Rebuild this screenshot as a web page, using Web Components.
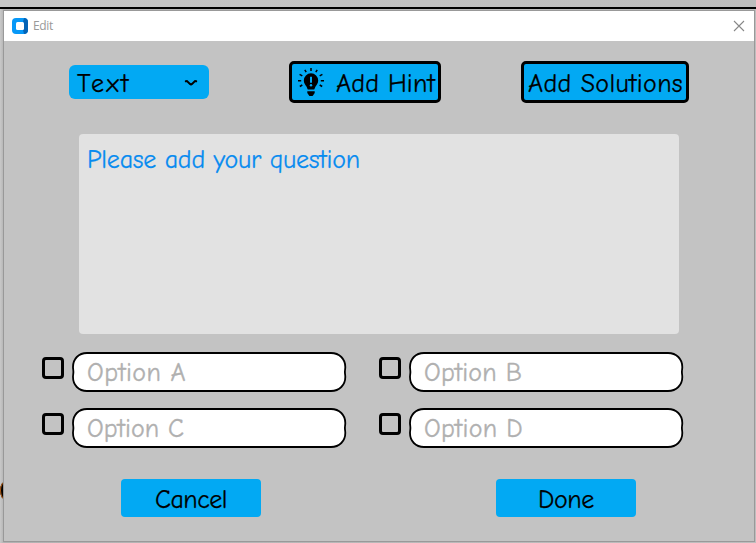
<!DOCTYPE html>
<html lang="en">
<head>
<meta charset="utf-8">
<title>Edit</title>
<style>
html,body{margin:0;width:756px;height:543px;overflow:hidden}
body{font-family:"Comic Sans MS","Comic Neue","Noto Sans",sans-serif;font-size:26px;color:#000;background:#c3c3c3}
</style>
</head>
<body>
<edit-desktop>
  <edit-window>
    <edit-form></edit-form>
  </edit-window>
</edit-desktop>
<script>
function define(name, html, setup) {
  const template = document.createElement('template');
  template.innerHTML = html;
  customElements.define(name, class extends HTMLElement {
    constructor() {
      super();
      this.attachShadow({mode: 'open'}).append(template.content.cloneNode(true));
    }
    connectedCallback() { if (setup) setup(this, this.shadowRoot); }
  });
}

/* A label whose letters are spaced evenly over a given width. */
define('fit-label', `
<style>:host{display:inline-block;white-space:nowrap;line-height:36px;height:34px;flex:none;-webkit-text-stroke:var(--stroke,.25px)}span{display:inline-block}</style>
<span><slot></slot></span>`, (el, root) => {
  const width = Number(el.getAttribute('width'));
  const span = root.querySelector('span');
  const natural = span.getBoundingClientRect().width;
  const count = el.textContent.length;
  if (natural && count) span.style.letterSpacing = (width - natural) / count + 'px';
  el.style.width = width + 'px';
});

define('icon-bulb', `
<style>:host{display:block;width:26px;height:30px;flex:none}svg{display:block}</style>
<svg width="26" height="30" viewBox="0 0 26 30">
  <path d="M13 5.3a7.2 7.2 0 0 0-7.2 7.2c0 3 1.7 4.5 2.8 6.2.5.9.7 2 1.2 2.8h6.4c.5-.8.7-1.9 1.2-2.8 1.1-1.7 2.8-3.2 2.8-6.2A7.2 7.2 0 0 0 13 5.3z"/>
  <path d="M9.3 23.3h7.4v1.8L14.6 28h-3.2l-2.1-2.9z"/>
  <path d="M13 0v3M6.8 1.8l1.4 2.4M19.2 1.8l-1.4 2.4M1.6 6.3l2.7 1.5M24.4 6.3l-2.7 1.5M0 12.7h3.2M26 12.7h-3.2M1.8 18.5l2.5-1.5M24.2 18.5l-2.5-1.5" fill="none" stroke="#000" stroke-width="1.5"/>
  <path d="M13 8.7v6" stroke="#02a9f3" stroke-width="2"/>
  <circle cx="13" cy="17.3" r="1.2" fill="#02a9f3"/>
</svg>`);

define('edit-button', `
<style>
:host{display:flex;align-items:center;justify-content:center;box-sizing:border-box;width:140px;height:38px;background:#02a9f3;border-radius:4px;padding-top:1px}
:host([outlined]){height:42px;border:3px solid #000;border-radius:5px;padding-top:2px}
:host([hint]){width:152px;justify-content:flex-start;gap:12px;padding-left:6px}
:host([solutions]){width:168px;padding-left:1px}
</style><slot></slot>`);

define('edit-select', `
<style>
:host{display:flex;align-items:center;justify-content:space-between;box-sizing:border-box;width:140px;height:34px;margin-top:4px;padding:2px 11px 0 8px;background:#02a9f3;border-radius:6px}
svg{display:block;margin-top:-1px}
</style>
<slot></slot>
<svg width="14" height="8" viewBox="0 0 14 8"><path d="M1.8 2.3l1.2-.2c1.4.8 2.2 2.8 4 3.4 1.800-.6 2.600-2.600 4-3.400l1.200.2" fill="none" stroke="#000" stroke-width="2" stroke-linecap="round"/></svg>`);

define('edit-question', `
<style>
:host{display:block;box-sizing:border-box;width:600px;height:200px;padding:8px;background:#e2e2e2;border-radius:4px;color:#078bf0}
</style><slot></slot>`);

define('edit-option', `
<style>
:host{display:flex;width:305px;height:40px;gap:8px}
.check{box-sizing:border-box;width:22px;height:22px;margin-top:5px;border:3px solid #000;border-radius:4px;flex:none}
.field{display:grid;width:275px;height:40px;color:#b0b0b0;--stroke:.35px}
.field>*{grid-area:1/1}
.text{padding:3px 0 0 15px}
svg{display:block}
</style>
<div class="check"></div>
<div class="field">
  <svg width="275" height="40" viewBox="0 0 275 40"><path d="M15 1H259C267.500 1 273.300 7 273.300 15C273.300 17 272.900 18 272.900 20S273.300 23 273.300 25C273.300 33 267.500 39 259 39H15C6.500 39 1 33 1 25C1 23 1.400 22 1.400 20S1 17 1 15C1 7 6.500 1 15 1Z" fill="#fff" stroke="#000" stroke-width="1.800"/></svg>
  <div class="text"><slot></slot></div>
</div>`);

define('edit-form', `
<style>
:host{display:block;padding:20px 0 0 38px}
.tools{display:flex;padding-left:27px}
.tools edit-button[hint]{margin-left:80px}
.tools edit-button[solutions]{margin-left:80px}
edit-question{margin:31px 0 0 37px}
.options{display:grid;grid-template-columns:305px 305px;column-gap:32px;row-gap:16px;margin-top:18px}
.actions{display:flex;gap:235px;margin:31px 0 0 79px}
</style>
<div class="tools">
  <edit-select><fit-label width="54">Text</fit-label></edit-select>
  <edit-button outlined hint><icon-bulb></icon-bulb><fit-label width="99">Add Hint</fit-label></edit-button>
  <edit-button outlined solutions><fit-label width="155">Add Solutions</fit-label></edit-button>
</div>
<edit-question><fit-label width="273">Please add your question</fit-label></edit-question>
<div class="options">
  <edit-option><fit-label width="99">Option A</fit-label></edit-option>
  <edit-option><fit-label width="98">Option B</fit-label></edit-option>
  <edit-option><fit-label width="97">Option C</fit-label></edit-option>
  <edit-option><fit-label width="99">Option D</fit-label></edit-option>
</div>
<div class="actions">
  <edit-button><fit-label width="72">Cancel</fit-label></edit-button>
  <edit-button><fit-label width="56">Done</fit-label></edit-button>
</div>`);

define('edit-window', `
<style>
:host{display:block;box-sizing:border-box;width:752px;height:532px;border:1px solid #999;background:#c3c3c3}
header{display:flex;align-items:center;box-sizing:border-box;height:30px;padding:0 9px 0 8px;background:#fff;color:#999;font:12px "Open Sans",sans-serif;--stroke:0}
svg{display:block;flex:none}
.title{margin-left:5px;flex:1;line-height:16px}
.title fit-label{line-height:16px;height:16px}
</style>
<header>
  <svg width="16" height="16" viewBox="0 0 16 16"><rect width="16" height="16" rx="4" fill="#0798f7"/><path d="M12 0c2.4 0 4 1.6 4 4v8c0 2.4-1.6 4-4 4l-1-4 1-1V5l-1-1z" fill="#0563b5"/><rect x="4" y="4" width="8" height="8" rx="1.5" fill="#fff"/></svg>
  <span class="title"><fit-label width="20">Edit</fit-label></span>
  <svg width="12" height="12" viewBox="0 0 12 12"><path d="M1 1l10 10M11 1L1 11" stroke="#888" stroke-width="1.1"/></svg>
</header>
<slot></slot>`);

define('edit-desktop', `
<style>
:host{display:block;position:relative;box-sizing:border-box;width:756px;height:543px;overflow:hidden;background:linear-gradient(90deg,#c9c9c9,#b2b2b2 4px,#bebebe)}
.edge{height:7px;border-bottom:2px solid #000;background:linear-gradient(90deg,#c6c6c6,#bdbdbd)}
.behind{position:absolute;left:0;top:481px;width:12px;height:19px;border-radius:50%;background:#000;box-shadow:inset 1px 0 #b35b12}
.front{position:relative;padding:1px 0 0 3px}
</style>
<div class="edge"></div><div class="behind"></div>
<div class="front"><slot></slot></div>`);
</script>
</body>
</html>
